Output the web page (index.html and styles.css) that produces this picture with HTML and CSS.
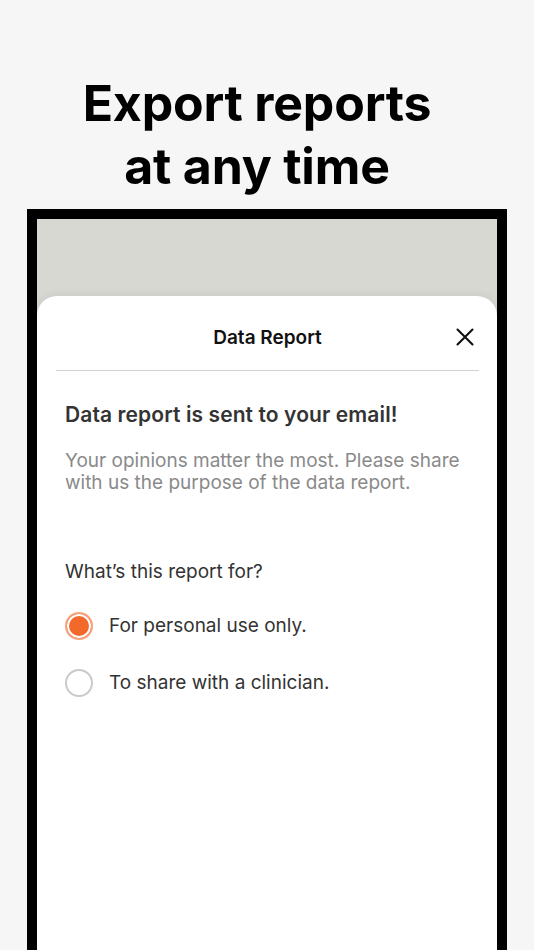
FILE: index.html
```html
<!DOCTYPE html>
<html lang="en">
<head>
<meta charset="utf-8">
<title>Export reports at any time</title>
<link rel="stylesheet" href="styles.css">
</head>
<body>
  <h1 class="headline">Export reports<br>at any time</h1>
  <div class="phone">
    <div class="screen">
      <div class="backdrop"></div>
      <div class="sheet">
        <div class="sheet-header">
          <span class="sheet-title">Data Report</span>
          <svg class="close" width="18" height="18" viewBox="0 0 18 18" aria-label="Close">
            <path d="M1.5 1.5 L16.5 16.5 M16.5 1.5 L1.5 16.5" stroke="#111" stroke-width="2.1" stroke-linecap="round" fill="none"/>
          </svg>
        </div>
        <div class="sheet-body">
          <h2 class="notice">Data report is sent to your email!</h2>
          <p class="lead">Your opinions matter the most. Please share with us the purpose of the data report.</p>
          <p class="question">What’s this report for?</p>
          <div class="options">
            <div class="option">
              <span class="radio radio-on"></span>
              <span class="option-label">For personal use only.</span>
            </div>
            <div class="option">
              <span class="radio"></span>
              <span class="option-label">To share with a clinician.</span>
            </div>
          </div>
        </div>
      </div>
    </div>
  </div>
</body>
</html>
```

FILE: styles.css
```css
html, body {
  margin: 0;
  padding: 0;
  height: 100%;
}
body {
  background: #f6f6f6;
  font-family: Inter, "Noto Sans", "Liberation Sans", sans-serif;
  overflow: hidden;
  display: flex;
  flex-direction: column;
}
.headline {
  margin: 72px 0 0;
  padding-right: 20px;
  text-align: center;
  font-size: 50px;
  line-height: 63px;
  font-weight: 700;
  letter-spacing: -0.2px;
  color: #000;
}
.phone {
  margin: 11px 27px 0;
  flex: 1;
  border: 10px solid #000;
  border-bottom: none;
  display: flex;
  flex-direction: column;
}
.screen {
  flex: 1;
  background: #d8d8d3;
  display: flex;
  flex-direction: column;
}
.backdrop {
  height: 77px;
}
.sheet {
  flex: 1;
  background: #fff;
  border-radius: 20px 20px 0 0;
  box-shadow: 0 -1px 8px rgba(0, 0, 0, 0.07);
}
.sheet-header {
  margin: 0 18px 0 19px;
  height: 75px;
  border-bottom: 1px solid #d2d2d2;
  box-sizing: border-box;
  display: flex;
  align-items: center;
  justify-content: center;
  position: relative;
}
.sheet-title {
  font-size: 19px;
  font-weight: 600;
  color: #111;
  margin-top: 8px;
}
.close {
  position: absolute;
  right: 5px;
  top: 32px;
}
.sheet-body {
  padding: 32px 28px 0;
}
.notice {
  margin: 0;
  font-size: 21px;
  line-height: 24px;
  font-weight: 600;
  letter-spacing: 0.1px;
  color: #333;
}
.lead {
  margin: 23px 0 0;
  font-size: 19px;
  line-height: 22px;
  color: #8a8a8a;
}
.question {
  margin: 67px 0 0;
  font-size: 19px;
  line-height: 22px;
  color: #333;
}
.options {
  margin-top: 29px;
  display: flex;
  flex-direction: column;
  gap: 29px;
}
.option {
  display: flex;
  align-items: center;
  gap: 16px;
}
.radio {
  width: 28px;
  height: 28px;
  box-sizing: border-box;
  border-radius: 50%;
  border: 2px solid #cacaca;
  flex: none;
}
.radio-on {
  border-color: #f7a27c;
  background: #f26a2b;
  box-shadow: inset 0 0 0 2px #fff;
}
.option-label {
  font-size: 19px;
  line-height: 22px;
  color: #333;
}
```
